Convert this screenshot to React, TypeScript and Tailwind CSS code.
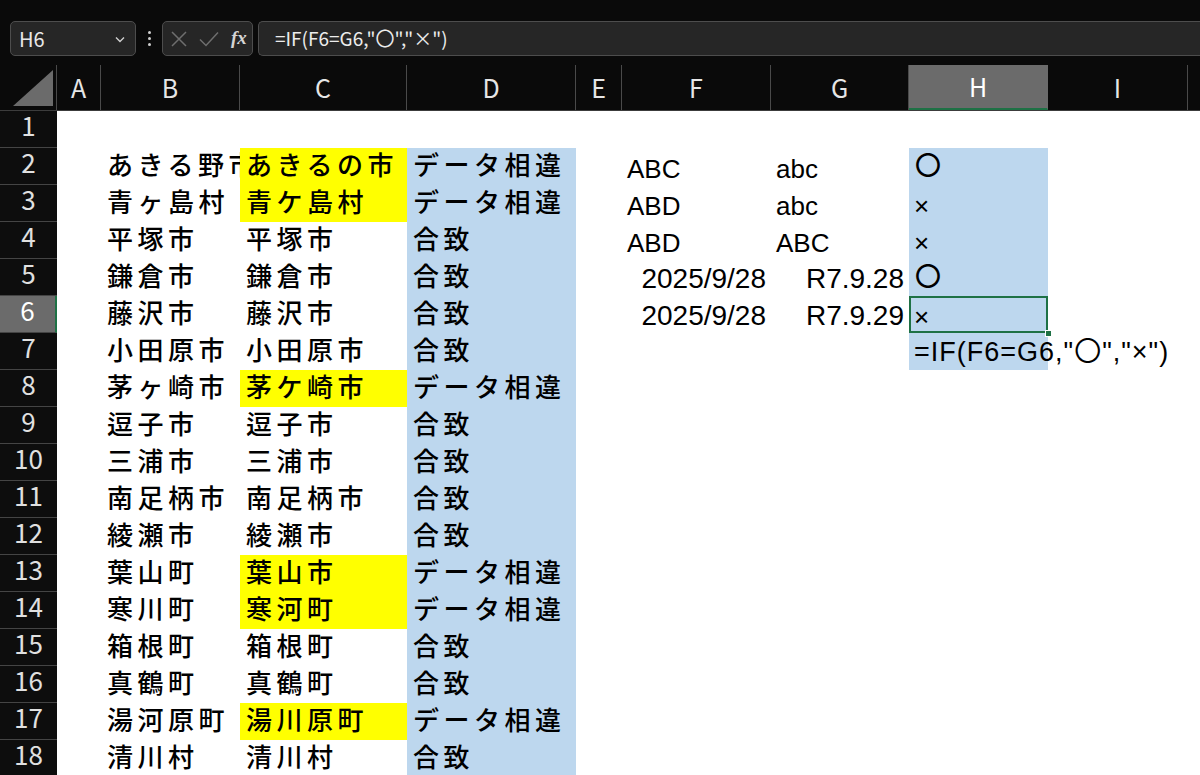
import { ReactNode } from "react";

type Cell = {
  text?: string;
  bg?: string;
  kind?: "jp" | "en" | "num";
  right?: boolean;
};

const COLS = ["A", "B", "C", "D", "E", "F", "G", "H", "I", ""];
const WIDTHS = [44, 139, 167, 169, 46, 149, 138, 139, 140, 60];

const YELLOW = "bg-[#ffff00]";
const BLUE = "bg-[#bdd7ee]";

const cities: [string, string, boolean][] = [
  ["あきる野市", "あきるの市", true],
  ["青ヶ島村", "青ケ島村", true],
  ["平塚市", "平塚市", false],
  ["鎌倉市", "鎌倉市", false],
  ["藤沢市", "藤沢市", false],
  ["小田原市", "小田原市", false],
  ["茅ヶ崎市", "茅ケ崎市", true],
  ["逗子市", "逗子市", false],
  ["三浦市", "三浦市", false],
  ["南足柄市", "南足柄市", false],
  ["綾瀬市", "綾瀬市", false],
  ["葉山町", "葉山市", true],
  ["寒川町", "寒河町", true],
  ["箱根町", "箱根町", false],
  ["真鶴町", "真鶴町", false],
  ["湯河原町", "湯川原町", true],
  ["清川村", "清川村", false],
];

const compare: [Cell, Cell, string][] = [
  [{ text: "ABC", kind: "en" }, { text: "abc", kind: "en" }, "〇"],
  [{ text: "ABD", kind: "en" }, { text: "abc", kind: "en" }, "×"],
  [{ text: "ABD", kind: "en" }, { text: "ABC", kind: "en" }, "×"],
  [{ text: "2025/9/28", kind: "num", right: true }, { text: "R7.9.28", kind: "num", right: true }, "〇"],
  [{ text: "2025/9/28", kind: "num", right: true }, { text: "R7.9.29", kind: "num", right: true }, "×"],
];

function buildRow(r: number): Cell[] {
  const row: Cell[] = COLS.map(() => ({}));
  if (r >= 2) {
    const [b, c, diff] = cities[r - 2];
    row[1] = { text: b, kind: "jp" };
    row[2] = { text: c, kind: "jp", bg: diff ? YELLOW : undefined };
    row[3] = { text: diff ? "データ相違" : "合致", kind: "jp", bg: BLUE };
  }
  if (r >= 2 && r <= 6) {
    const [f, g, h] = compare[r - 2];
    row[5] = f;
    row[6] = g;
    row[7] = { text: h, kind: h === "〇" ? "jp" : "en", bg: BLUE };
  }
  if (r === 7) row[7] = { bg: BLUE };
  return row;
}

const textClass = {
  jp: "text-[26px] font-medium tracking-[4.5px] pt-[5px] pl-[6px]",
  en: "text-[26px] pt-[8px] pl-[5px]",
  num: "text-[28px] pt-[6px] pr-[5px]",
};

function CellView({ cell, w, children }: { cell: Cell; w: number; children?: ReactNode }) {
  return (
    <div className={`relative h-full shrink-0 ${cell.bg ?? ""}`} style={{ width: w }}>
      <div
        className={`h-full overflow-hidden whitespace-nowrap leading-none text-black ${cell.right ? "text-right" : ""} ${cell.kind ? textClass[cell.kind] : ""}`}
      >
        {cell.text}
      </div>
      {children}
    </div>
  );
}

function NameBox() {
  return (
    <div className="flex h-[35px] w-[126px] items-center justify-between rounded-[5px] border border-[#4d4d4d] bg-[#262626] pl-[8px] pr-[8px]">
      <span className="text-[20px] text-[#e8e8e8]">H6</span>
      <svg width="14" height="14" viewBox="0 0 14 14" fill="none" stroke="#d0d0d0" strokeWidth="1.4">
        <path d="M3 5.5 L7 9.5 L11 5.5" />
      </svg>
    </div>
  );
}

export default function App() {
  const rows = Array.from({ length: 18 }, (_, i) => i + 1);
  return (
    <div
      className="h-[775px] w-[1200px] overflow-hidden bg-[#0a0a0a]"
      style={{ fontFamily: '"Liberation Sans", "Noto Sans CJK JP", sans-serif' }}
    >
      {/* formula bar */}
      <div className="flex h-[65px] items-start pt-[21px] pl-[10px]" style={{ fontFamily: '"Noto Sans CJK JP", sans-serif' }}>
        <NameBox />
        <div className="flex h-[35px] w-[26px] flex-col items-center justify-center gap-[3px]">
          <span className="h-[3px] w-[3px] rounded-full bg-[#d0d0d0]" />
          <span className="h-[3px] w-[3px] rounded-full bg-[#d0d0d0]" />
          <span className="h-[3px] w-[3px] rounded-full bg-[#d0d0d0]" />
        </div>
        <div className="flex h-[35px] w-[91px] items-center gap-[12px] rounded-[5px] border border-[#4d4d4d] bg-[#262626] pl-[8px]">
          <svg width="16" height="16" viewBox="0 0 16 16" stroke="#6e6e6e" strokeWidth="1.5">
            <path d="M1 1 L15 15 M15 1 L1 15" />
          </svg>
          <svg width="20" height="16" viewBox="0 0 20 16" fill="none" stroke="#6e6e6e" strokeWidth="1.5">
            <path d="M1 8.5 L7 14.5 L19 1.5" />
          </svg>
          <span className="text-[19px] font-bold italic text-[#d4d4d4]" style={{ fontFamily: '"Liberation Serif", serif' }}>
            fx
          </span>
        </div>
        <div className="ml-[5px] flex h-[35px] flex-1 items-center rounded-l-[5px] border border-r-0 border-[#4d4d4d] bg-[#262626] pl-[16px]">
          <span className="text-[19px] text-[#ececec]">=IF(F6=G6,"〇","×")</span>
        </div>
      </div>

      {/* column headers */}
      <div className="flex h-[46px] border-b border-[#3c3c3c]" style={{ fontFamily: '"Noto Sans CJK JP", sans-serif' }}>
        <div className="flex w-[57px] shrink-0 items-end justify-end border-r border-[#4a4a4a] pb-[4px] pr-[3px]">
          <svg width="40" height="36" viewBox="0 0 40 36">
            <polygon points="0,36 40,0 40,36" fill="#6b6b6b" />
          </svg>
        </div>
        {COLS.map((c, i) => (
          <div
            key={i}
            className={`flex shrink-0 items-center justify-center border-r text-[25px] ${
              c === "H"
                ? "border-[#6b6b6b] border-b-2 border-b-[#1e7145] bg-[#6b6b6b] text-white"
                : "border-[#4a4a4a] text-[#e6e6e6]"
            }`}
            style={{ width: WIDTHS[i] }}
          >
            {c}
          </div>
        ))}
      </div>

      {/* grid */}
      {rows.map((r) => {
        const cells = buildRow(r);
        return (
          <div key={r} className="flex h-[37px]">
            <div
              className={`flex w-[57px] shrink-0 items-center justify-center border-b border-[#444] pb-[8px] text-[26px] leading-none ${
                r === 6 ? "border-r-2 border-r-[#1e7145] bg-[#6b6b6b] text-white" : "bg-[#0d0d0d] text-[#e0e0e0]"
              }`}
              style={{ fontFamily: '"Noto Sans CJK JP", sans-serif' }}
            >
              {r}
            </div>
            <div className="flex flex-1 bg-white">
              {cells.map((cell, i) => {
                if (r === 7 && i === 7) {
                  return (
                    <div key={i} className={`relative h-full shrink-0 ${BLUE}`} style={{ width: WIDTHS[i] }}>
                      <span className="absolute left-[5px] top-[6px] z-10 whitespace-nowrap text-[27px] leading-none tracking-[1px] text-black">
                        =IF(F6=G6,"〇","×")
                      </span>
                    </div>
                  );
                }
                return (
                  <CellView key={i} cell={cell} w={WIDTHS[i]}>
                    {r === 6 && i === 7 && (
                      <>
                        <span className="pointer-events-none absolute inset-0 border-2 border-[#1e7145]" />
                        <span className="absolute -bottom-[4px] -right-[4px] z-20 h-[7px] w-[7px] border border-white bg-[#1e7145]" />
                      </>
                    )}
                  </CellView>
                );
              })}
            </div>
          </div>
        );
      })}
    </div>
  );
}
